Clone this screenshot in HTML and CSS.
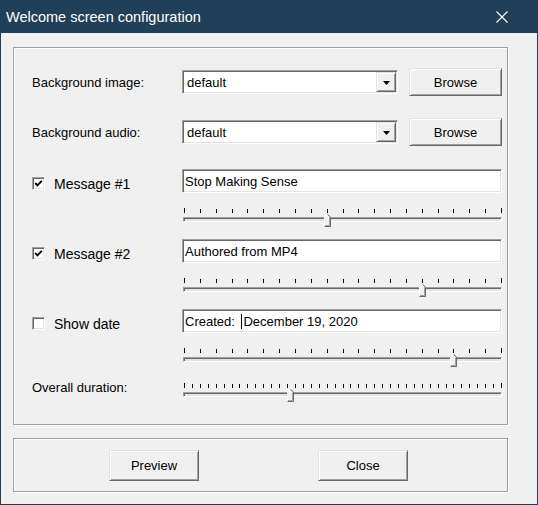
FILE: index.html
```html
<!DOCTYPE html>
<html>
<head>
<meta charset="utf-8">
<link rel="stylesheet" href="styles.css">
</head>
<body>
<div class="window">
  <div class="titlebar">
    <span class="title">Welcome screen configuration</span>
    <svg class="close-icon" width="12" height="12" viewBox="0 0 12 12"><path d="M0.5 0.5 L11.5 11.5 M11.5 0.5 L0.5 11.5" stroke="#fff" stroke-width="1.1" fill="none"/></svg>
  </div>
  <div class="content">
    <div class="group group-main">
      <div class="row row-combo">
        <span class="label">Background image:</span>
        <div class="controls">
          <div class="combo"><span class="combo-text">default</span><span class="drop"><svg width="7" height="4" viewBox="0 0 7 4"><polygon points="0,0 7,0 3.5,4" fill="#000"/></svg></span></div>
          <button class="btn btn-browse">Browse</button>
        </div>
      </div>
      <div class="row row-combo row-combo-2">
        <span class="label">Background audio:</span>
        <div class="controls">
          <div class="combo"><span class="combo-text">default</span><span class="drop"><svg width="7" height="4" viewBox="0 0 7 4"><polygon points="0,0 7,0 3.5,4" fill="#000"/></svg></span></div>
          <button class="btn btn-browse">Browse</button>
        </div>
      </div>

      <div class="row row-field mt-lg">
        <label class="label check-label"><span class="cb"><svg width="9" height="9" viewBox="0 0 9 9"><path d="M1.2 4 L3.4 6.4 L7.8 1.8" stroke="#000" stroke-width="1.9" fill="none"/></svg></span>Message #1</label>
        <div class="field">Stop Making Sense</div>
      </div>
      <div class="row row-track mt">
        <span class="label"></span>
        <div class="track">
          <div class="ticks"></div>
          <div class="channel"></div>
          <svg class="thumb" style="left:142px" width="7" height="13" viewBox="0 0 7 13"><polygon points="0.5,3 3.5,0.5 6.5,3 6.5,12.5 0.5,12.5" fill="#f0f0f0"/><polyline points="0.5,12 0.5,3 3.5,0.5" stroke="#fff" fill="none"/><polyline points="3.5,0.5 6.5,3 6.5,12.5 0.5,12.5" stroke="#696969" fill="none"/><polyline points="5.5,3.5 5.5,11.5 1,11.5" stroke="#a0a0a0" fill="none"/></svg>
        </div>
      </div>

      <div class="row row-field mt">
        <label class="label check-label"><span class="cb"><svg width="9" height="9" viewBox="0 0 9 9"><path d="M1.2 4 L3.4 6.4 L7.8 1.8" stroke="#000" stroke-width="1.9" fill="none"/></svg></span>Message #2</label>
        <div class="field">Authored from MP4</div>
      </div>
      <div class="row row-track mt">
        <span class="label"></span>
        <div class="track">
          <div class="ticks"></div>
          <div class="channel"></div>
          <svg class="thumb" style="left:237px" width="7" height="13" viewBox="0 0 7 13"><polygon points="0.5,3 3.5,0.5 6.5,3 6.5,12.5 0.5,12.5" fill="#f0f0f0"/><polyline points="0.5,12 0.5,3 3.5,0.5" stroke="#fff" fill="none"/><polyline points="3.5,0.5 6.5,3 6.5,12.5 0.5,12.5" stroke="#696969" fill="none"/><polyline points="5.5,3.5 5.5,11.5 1,11.5" stroke="#a0a0a0" fill="none"/></svg>
        </div>
      </div>

      <div class="row row-field mt">
        <label class="label check-label"><span class="cb"></span>Show date</label>
        <div class="field">Created: <span class="caret"></span>December 19, 2020</div>
      </div>
      <div class="row row-track mt">
        <span class="label"></span>
        <div class="track">
          <div class="ticks"></div>
          <div class="channel"></div>
          <svg class="thumb" style="left:268px" width="7" height="13" viewBox="0 0 7 13"><polygon points="0.5,3 3.5,0.5 6.5,3 6.5,12.5 0.5,12.5" fill="#f0f0f0"/><polyline points="0.5,12 0.5,3 3.5,0.5" stroke="#fff" fill="none"/><polyline points="3.5,0.5 6.5,3 6.5,12.5 0.5,12.5" stroke="#696969" fill="none"/><polyline points="5.5,3.5 5.5,11.5 1,11.5" stroke="#a0a0a0" fill="none"/></svg>
        </div>
      </div>

      <div class="row row-track row-overall mt">
        <span class="label label-overall">Overall duration:</span>
        <div class="track">
          <div class="ticks ticks-fine"></div>
          <div class="channel"></div>
          <svg class="thumb" style="left:105px" width="7" height="13" viewBox="0 0 7 13"><polygon points="0.5,3 3.5,0.5 6.5,3 6.5,12.5 0.5,12.5" fill="#f0f0f0"/><polyline points="0.5,12 0.5,3 3.5,0.5" stroke="#fff" fill="none"/><polyline points="3.5,0.5 6.5,3 6.5,12.5 0.5,12.5" stroke="#696969" fill="none"/><polyline points="5.5,3.5 5.5,11.5 1,11.5" stroke="#a0a0a0" fill="none"/></svg>
        </div>
      </div>
    </div>

    <div class="group group-footer">
      <button class="btn btn-footer">Preview</button>
      <button class="btn btn-footer">Close</button>
    </div>
  </div>
</div>
</body>
</html>
```
FILE: styles.css
```css
* { box-sizing: border-box; }

body {
  margin: 0;
  background: #f0f0f0;
  font-family: "Liberation Sans", Arial, sans-serif;
  font-size: 13px;
  color: #000;
}

.window {
  width: 538px;
  height: 505px;
  border: 1px solid #1f4058;
  background: #f0f0f0;
  display: flex;
  flex-direction: column;
}

.titlebar {
  height: 32px;
  flex: none;
  background: #1f4058;
  color: #fff;
  display: flex;
  align-items: center;
  justify-content: space-between;
  padding: 0 29px 0 5px;
}

.title {
  font-size: 14.5px;
  line-height: 18px;
}

.close-icon { display: block; }

.content {
  padding: 14px 29px 12px 12px;
}

.group {
  border: 1px solid #a0a0a0;
  box-shadow: inset 1px 1px 0 #fff, 1px 1px 0 #fff;
}

.group-main {
  height: 378px;
  padding: 20px 0 0 18px;
}

.row {
  display: flex;
  align-items: center;
}

.label {
  width: 150px;
  flex: none;
}

.controls {
  width: 320px;
  display: flex;
  align-items: center;
  justify-content: space-between;
}

.row-combo { height: 28px; }
.row-combo-2 { margin-top: 22px; }
.row-field { height: 24px; }
.row-track { height: 24px; align-items: flex-start; }
.mt-lg { margin-top: 23px; }
.mt { margin-top: 11px; }

.label-overall {
  margin-top: 1px;
  line-height: 15px;
}

.combo {
  width: 216px;
  height: 24px;
  display: flex;
  align-items: stretch;
  padding: 1px;
  background: #fff;
  border: 1px solid;
  border-color: #a0a0a0 #fff #fff #a0a0a0;
  box-shadow: inset 1px 1px 0 #696969, inset -1px -1px 0 #e3e3e3;
}

.combo-text {
  flex: 1;
  padding-left: 3px;
  line-height: 21px;
}

.drop {
  width: 20px;
  display: flex;
  align-items: center;
  justify-content: center;
  background: #f0f0f0;
  border: 1px solid;
  border-color: #e3e3e3 #696969 #696969 #e3e3e3;
  box-shadow: inset 1px 1px 0 #fff, inset -1px -1px 0 #a0a0a0;
}

.drop svg { display: block; margin-top: 1px; }

.btn {
  font-family: "Liberation Sans", Arial, sans-serif;
  font-size: 13px;
  color: #000;
  background: #f0f0f0;
  border: 1px solid;
  border-color: #e3e3e3 #696969 #696969 #e3e3e3;
  box-shadow: inset 1px 1px 0 #fff, inset -1px -1px 0 #a0a0a0;
  padding: 0;
}

.btn-browse {
  width: 93px;
  height: 28px;
}

.field {
  width: 320px;
  height: 24px;
  background: #fff;
  border: 1px solid;
  border-color: #a0a0a0 #fff #fff #a0a0a0;
  box-shadow: inset 1px 1px 0 #696969, inset -1px -1px 0 #e3e3e3;
  padding-left: 2px;
  line-height: 23px;
  font-size: 13px;
  white-space: nowrap;
}

.caret {
  display: inline-block;
  width: 1px;
  height: 15px;
  background: #000;
  vertical-align: -3px;
  margin-left: 3px;
  margin-right: 1px;
}

.check-label {
  display: flex;
  align-items: center;
  font-size: 14px;
  margin-top: 5px;
}

.cb {
  width: 13px;
  height: 13px;
  flex: none;
  margin-right: 9px;
  background: #fff;
  border: 1px solid;
  border-color: #a0a0a0 #fff #fff #a0a0a0;
  box-shadow: inset 1px 1px 0 #696969, inset -1px -1px 0 #e3e3e3;
  display: flex;
  align-items: center;
  justify-content: center;
}

.cb svg { display: block; }

.track {
  position: relative;
  width: 320px;
  height: 24px;
}

.ticks {
  position: absolute;
  left: 2px;
  top: 5px;
  width: 318px;
  height: 4px;
  background: repeating-linear-gradient(to right, #000 0 1px, transparent 1px 15.85px);
}

.ticks-fine {
  background: repeating-linear-gradient(to right, #000 0 1px, transparent 1px 7.925px);
}

.ticks::before,
.ticks::after {
  content: "";
  position: absolute;
  top: -1px;
  width: 1px;
  height: 5px;
  background: #000;
}

.ticks::before { left: 0; }
.ticks::after { right: 0; }

.channel {
  position: absolute;
  left: 1px;
  top: 13px;
  width: 319px;
  height: 5px;
  border: 1px solid;
  border-color: #a0a0a0 #fff #fff #a0a0a0;
  box-shadow: inset 1px 1px 0 #696969;
  background: #e3e3e3;
}

.thumb {
  position: absolute;
  top: 10px;
  display: block;
}

.group-footer {
  margin-top: 13px;
  height: 54px;
  display: flex;
  align-items: flex-start;
  gap: 119px;
  padding: 11px 0 0 95px;
}

.btn-footer {
  width: 90px;
  height: 31px;
}
```
